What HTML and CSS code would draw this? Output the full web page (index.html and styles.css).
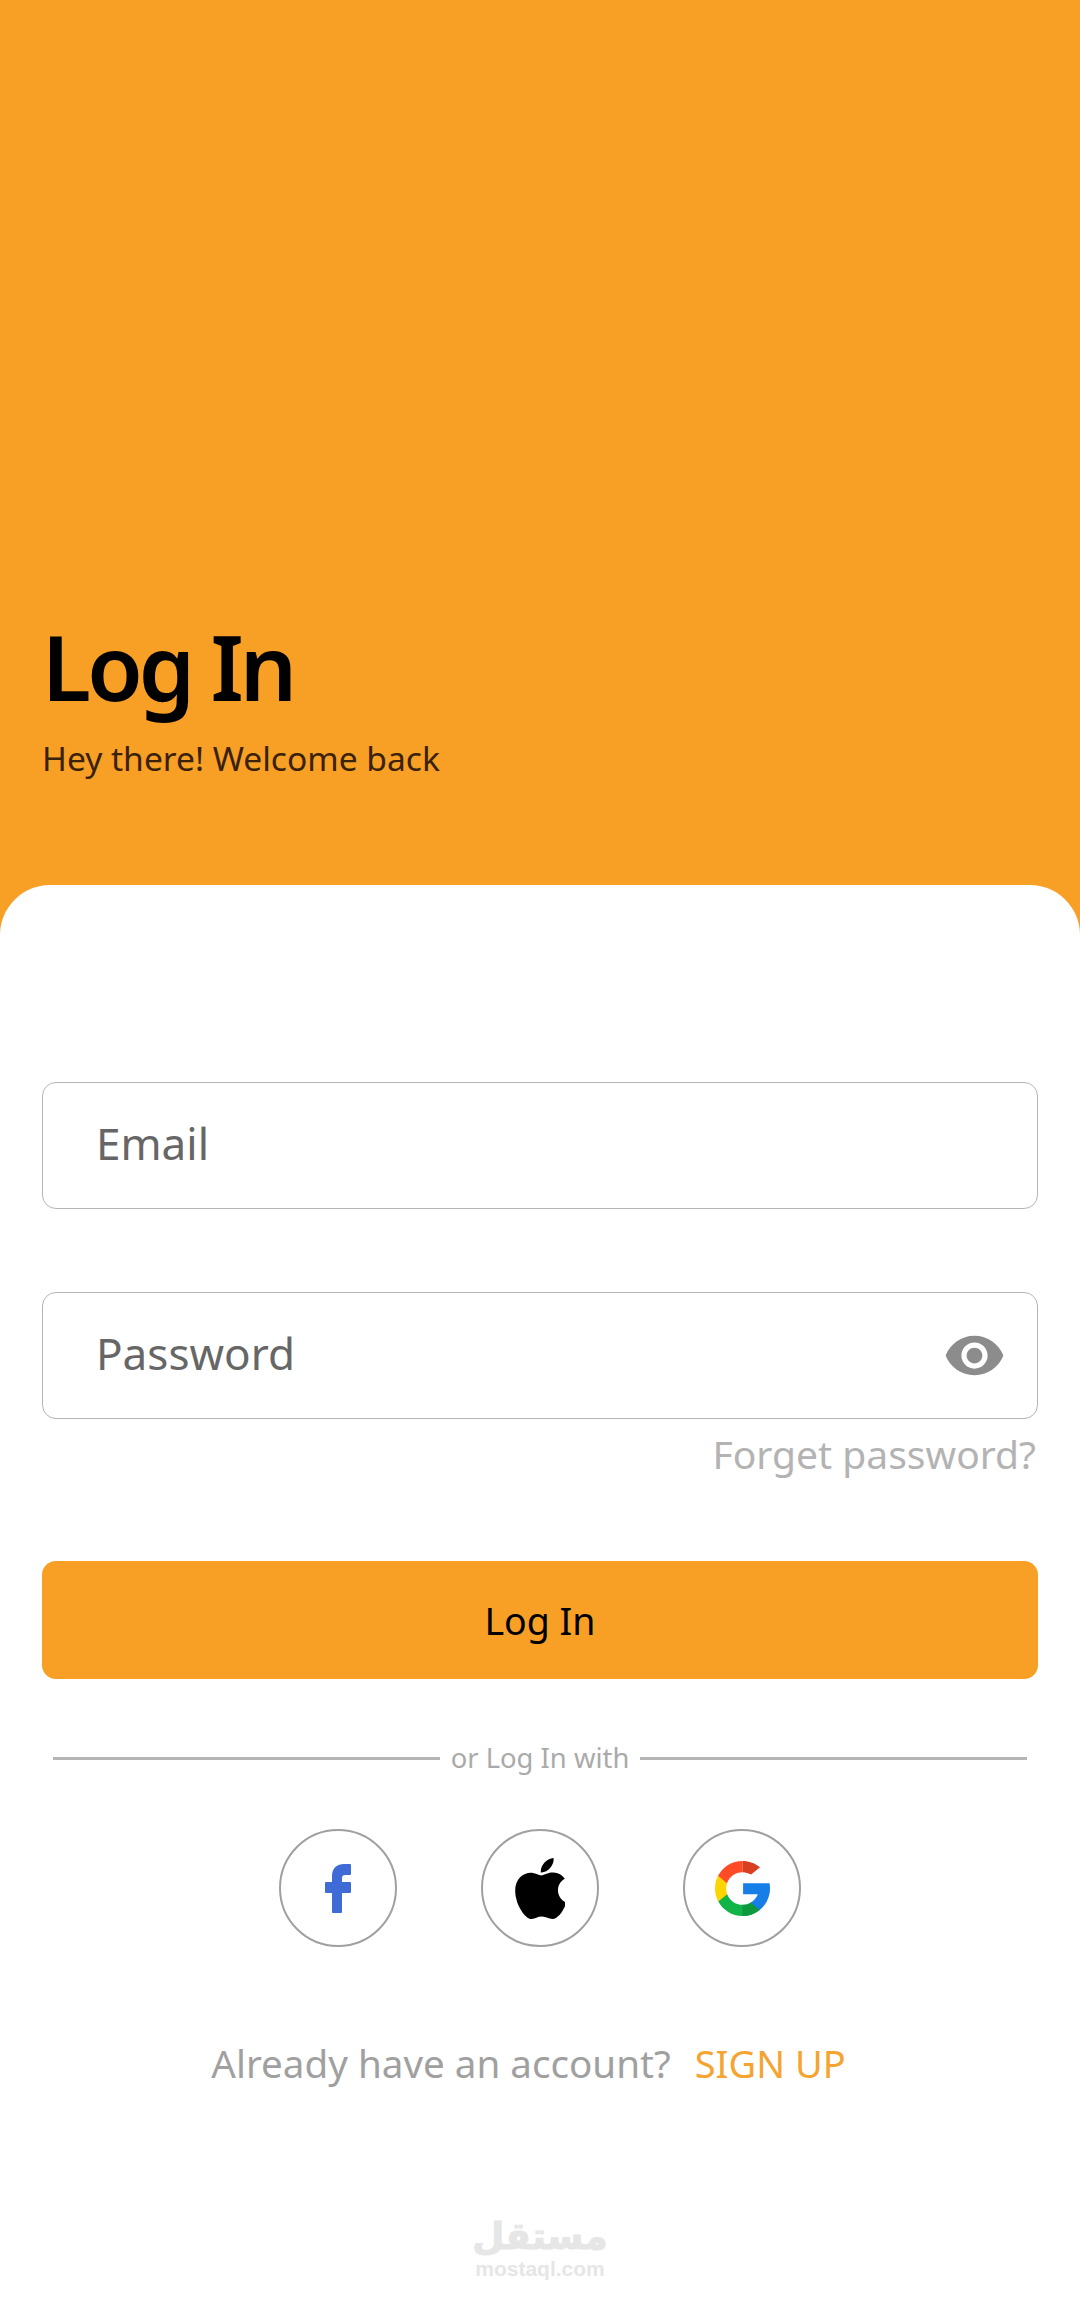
FILE: index.html

```html
<!DOCTYPE html>
<html lang="en">
<head>
<meta charset="UTF-8" />
<meta name="viewport" content="width=device-width, initial-scale=1" />
<title>Log In</title>
<link rel="stylesheet" href="styles.css">
</head>
<body>
<header class="hero">
  <h1 class="hero-title">Log In</h1>
  <p class="hero-sub">Hey there! Welcome back</p>
</header>

<main class="card">
  <div class="field"><span>Email</span></div>
  <div class="field field-password">
    <span>Password</span>
    <svg class="eye" viewBox="0 0 24 24" aria-hidden="true"><path d="M12 4.5C7 4.5 2.73 7.61 1 12c1.73 4.39 6 7.5 11 7.5s9.27-3.11 11-7.5c-1.73-4.39-6-7.5-11-7.5zM12 17c-2.76 0-5-2.24-5-5s2.24-5 5-5 5 2.24 5 5-2.24 5-5 5zm0-8c-1.66 0-3 1.34-3 3s1.34 3 3 3 3-1.34 3-3-1.34-3-3-3z"/></svg>
  </div>
  <div class="forget">Forget password?</div>

  <button class="login-btn" type="button">Log In</button>

  <div class="divider"><span>or Log In with</span></div>

  <div class="socials">
    <a class="social">
      <svg class="icon-fb" viewBox="0 0 26 49" aria-hidden="true"><path d="M7 12C7 4 12 0 19 0h6a1 1 0 0 1 1 1v9a1 1 0 0 1-1 1h-5c-2 0-3 1-3 3v4h8a1 1 0 0 1 1 1v9a1 1 0 0 1-1 1h-8v19a1 1 0 0 1-1 1H8a1 1 0 0 1-1-1V29H1a1 1 0 0 1-1-1v-9a1 1 0 0 1 1-1h6z"/></svg>
    </a>
    <a class="social">
      <svg class="icon-apple" viewBox="4 32 365 448" aria-hidden="true"><path d="M318.7 268.7c-.2-36.7 16.400-64.400 50-84.800-18.800-26.900-47.200-41.700-84.700-44.600-35.500-2.800-74.300 20.700-88.500 20.700-15 0-49.400-19.700-76.400-19.700C63.300 141.200 4 184.800 4 273.500q0 39.300 14.400 81.200c12.800 36.700 59 126.700 107.200 125.200 25.200-.6 43-17.900 75.800-17.900 31.800 0 48.300 17.900 76.400 17.900 48.600-.7 90.400-82.500 102.600-119.300-65.200-30.700-61.700-90-61.700-91.900zm-56.600-164.200c27.300-32.400 24.800-61.900 24-72.500-24.100 1.400-52 16.400-67.900 34.900-17.500 19.800-27.800 44.300-25.600 71.900 26.100 2 49.900-11.400 69.500-34.300z"/></svg>
    </a>
    <a class="social">
      <svg class="icon-google" viewBox="0 0 512 512" aria-hidden="true">
        <path fill="#FFD500" d="M113.470 309.408L95.648 375.940l-65.139 1.378C11.042 341.211 0 299.900 0 256c0-42.451 10.324-82.483 28.624-117.732h.014l57.992 10.632 25.404 57.644c-5.317 15.501-8.215 32.141-8.215 49.456 0 18.792 3.404 36.797 9.651 53.408z"/>
        <path fill="#167EE6" d="M507.527 208.176C510.467 223.662 512 239.655 512 256c0 18.328-1.927 36.206-5.598 53.451-12.462 58.683-45.025 109.925-90.134 146.187l-.014-.014-73.044-3.727-10.338-64.535c29.932-17.554 53.324-45.025 65.646-77.911h-136.890V208.176h138.887z"/>
        <path fill="#12B347" d="M416.253 455.624l.014.014C372.396 490.901 316.666 512 256 512c-97.491 0-182.252-54.491-225.491-134.681l82.961-67.910c21.619 57.698 77.278 98.771 142.530 98.771z"/>
        <path fill="#0F993E" d="M416.253 455.624l.014.014C372.396 490.901 316.666 512 256 512V408.180c28.047 0 54.323-7.582 76.870-20.818z"/>
        <path fill="#FF4B26" d="M256 0C157.060 0 71.230 56.123 28.638 138.268l83.397 68.276C132.571 146.777 189.271 103.820 256 103.820z"/>
        <path fill="#D93F21" d="M419.404 58.936l-82.933 67.896c-23.335-14.586-50.919-23.012-80.471-23.012V0c62.115 0 119.068 22.126 163.404 58.936z"/>
      </svg>
    </a>
  </div>

  <p class="signup">Already have an account? <a class="signup-link">SIGN UP</a></p>

  <div class="watermark">
    <span class="watermark-ar">مستقل</span>
    <span class="watermark-en">mostaql.com</span>
  </div>
</main>
</body>
</html>
```

FILE: styles.css

```css
* {
  box-sizing: border-box;
}

body {
  margin: 0;
  height: 2324px;
  overflow: hidden;
  background: #f89f25;
  font-family: "Noto Sans", "Open Sans", sans-serif;
  display: flex;
  flex-direction: column;
}

.hero {
  height: 885px;
  padding: 0 42px 102px;
  display: flex;
  flex-direction: column;
  justify-content: flex-end;
}
.hero-title {
  margin: 0;
  font-size: 90px;
  font-weight: 600;
  letter-spacing: -4px;
  line-height: 110px;
  color: #000;
}
.hero-sub {
  margin: 12px 0 0;
  font-size: 33.6px;
  line-height: 50px;
  color: #3a2208;
}

.card {
  flex: 1;
  background: #fff;
  border-radius: 50px 50px 0 0;
  padding: 197px 42px 0;
  display: flex;
  flex-direction: column;
}

.field {
  height: 127px;
  border: 1px solid #b4b4b4;
  border-radius: 14px;
  padding: 0 31px 5px 53px;
  display: flex;
  align-items: center;
  justify-content: space-between;
  font-size: 44px;
  color: #666;
}
.field-password {
  margin-top: 83px;
}
.eye {
  width: 63px;
  height: 63px;
  margin-top: 5px;
  fill: #8c8c8c;
}

.forget {
  margin-top: 7px;
  padding-right: 2px;
  text-align: right;
  font-size: 39px;
  line-height: 56px;
  color: #b3b3b3;
}

.login-btn {
  margin-top: 79px;
  height: 118px;
  border: none;
  border-radius: 14px;
  background: #f89f25;
  color: #000;
  font-family: inherit;
  font-size: 37.5px;
}

.divider {
  margin-top: 57px;
  padding: 0 11px;
  display: flex;
  align-items: center;
  gap: 11px;
  font-size: 27.4px;
  line-height: 44px;
  color: #aaa;
}
.divider::before,
.divider::after {
  content: "";
  flex: 1;
  height: 3px;
  background: #b5b5b5;
}

.socials {
  margin-top: 49px;
  display: flex;
  justify-content: center;
  gap: 84px;
}
.social {
  width: 118px;
  height: 118px;
  border: 2.5px solid #a0a0a0;
  border-radius: 50%;
  display: flex;
  align-items: center;
  justify-content: center;
}
.icon-fb {
  width: 26px;
  height: 49px;
  fill: #3f6bd6;
}
.icon-apple {
  width: 50px;
  height: 61px;
  fill: #000;
}
.icon-google {
  width: 55px;
  height: 55px;
}

.signup {
  margin: 88px 0 0;
  padding-right: 23px;
  text-align: center;
  font-size: 38.6px;
  line-height: 56px;
  color: #a0a0a0;
}
.signup-link {
  margin-left: 14px;
  font-size: 38px;
  color: #f5a431;
}

.watermark {
  margin-top: 125px;
  display: flex;
  flex-direction: column;
  align-items: center;
  color: #e6e6e6;
  font-weight: 700;
}
.watermark-ar {
  font-family: "DejaVu Sans", sans-serif;
  font-size: 37px;
  line-height: 41px;
  -webkit-text-stroke: 1px #e6e6e6;
}
.watermark-en {
  font-family: "Liberation Sans", sans-serif;
  font-size: 21px;
  line-height: 24px;
}
```
